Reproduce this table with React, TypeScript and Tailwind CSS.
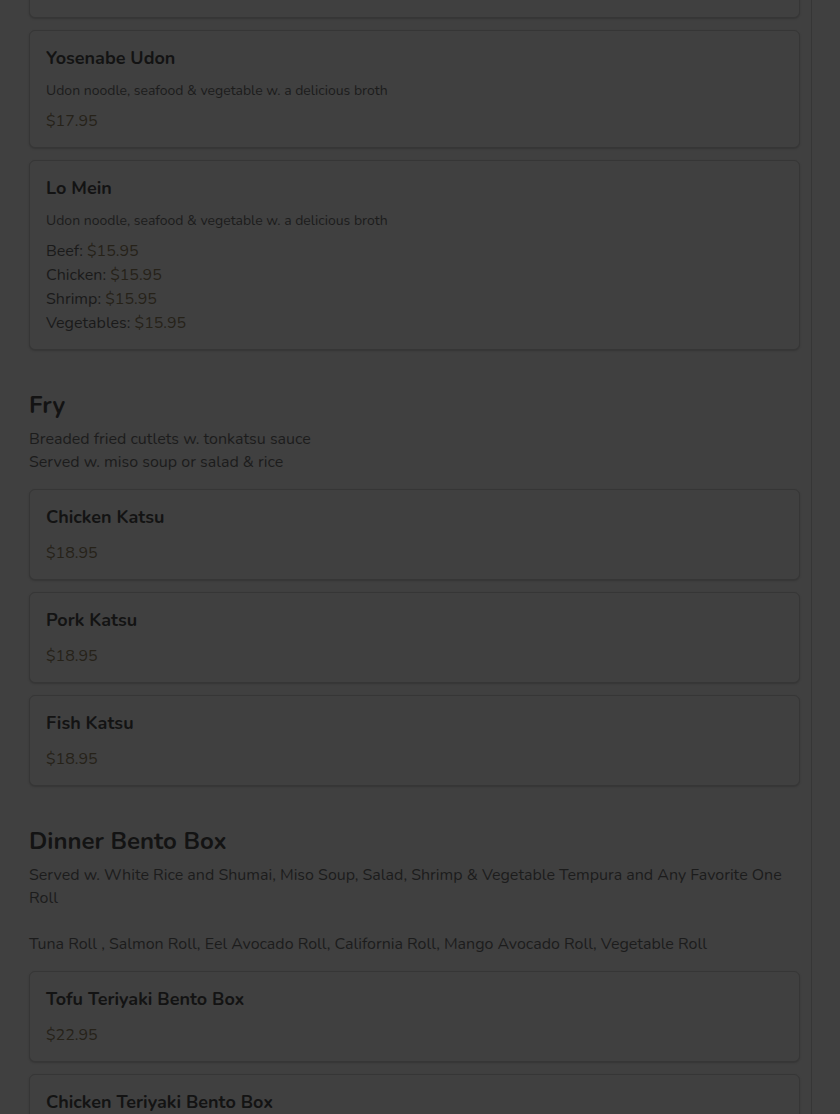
import React from 'react';

type Item = {
  name: string;
  desc?: string;
  prices: { label?: string; value: string }[];
};

type Section = {
  title?: string;
  notes?: string[];
  items: Item[];
};

const broth = 'Udon noodle, seafood & vegetable w. a delicious broth';

const sections: Section[] = [
  {
    items: [
      { name: 'Nabeyaki Udon', desc: broth, prices: [{ value: '$17.95' }] },
      { name: 'Yosenabe Udon', desc: broth, prices: [{ value: '$17.95' }] },
      {
        name: 'Lo Mein',
        desc: broth,
        prices: [
          { label: 'Beef', value: '$15.95' },
          { label: 'Chicken', value: '$15.95' },
          { label: 'Shrimp', value: '$15.95' },
          { label: 'Vegetables', value: '$15.95' },
        ],
      },
    ],
  },
  {
    title: 'Fry',
    notes: ['Breaded fried cutlets w. tonkatsu sauce', 'Served w. miso soup or salad & rice'],
    items: [
      { name: 'Chicken Katsu', prices: [{ value: '$18.95' }] },
      { name: 'Pork Katsu', prices: [{ value: '$18.95' }] },
      { name: 'Fish Katsu', prices: [{ value: '$18.95' }] },
    ],
  },
  {
    title: 'Dinner Bento Box',
    notes: [
      'Served w. White Rice and Shumai, Miso Soup, Salad, Shrimp & Vegetable Tempura and Any Favorite One Roll',
      '',
      'Tuna Roll , Salmon Roll, Eel Avocado Roll, California Roll, Mango Avocado Roll, Vegetable Roll',
    ],
    items: [
      { name: 'Tofu Teriyaki Bento Box', prices: [{ value: '$22.95' }] },
      { name: 'Chicken Teriyaki Bento Box', prices: [{ value: '$22.95' }] },
    ],
  },
];

const MenuCard: React.FC<{ item: Item }> = ({ item }) => (
  <div className="rounded-md border border-[#363636] bg-[#404040] px-4 pt-4 pb-[14px] shadow-[0_1px_2px_rgba(0,0,0,0.18)]">
    <h3 className="text-[18px] font-bold leading-[22px] text-[#131313]">{item.name}</h3>
    {item.desc && <p className="mt-3 text-[14px] leading-5 text-[#1c1c1c]">{item.desc}</p>}
    <div className={item.desc ? 'mt-2' : 'mt-[13px]'}>
      {item.prices.map((p, i) => (
        <div key={i} className="text-[16px] leading-6 text-[#1a1a1a]">
          {p.label && <span>{p.label}: </span>}
          <span className="text-[#262219]">{p.value}</span>
        </div>
      ))}
    </div>
  </div>
);

export default function App() {
  return (
    <div className="min-h-screen bg-[#404040] font-['Nunito','Lato',sans-serif]">
      <div className="w-[812px] min-h-screen border-r border-[#363636] pl-[29px] pr-[11px] overflow-hidden">
        <div className="-mt-[100px]">
          {sections.map((s, si) => (
            <section key={si} className={si > 0 ? 'mt-[39px]' : ''}>
              {s.title && (
                <div className="mb-[15px]">
                  <h2 className="text-[24px] font-bold leading-8 text-[#131313]">{s.title}</h2>
                  <div className="mt-[7px] text-[16px] leading-[23px] text-[#1c1c1c]">
                    {s.notes?.map((n, i) => (n ? <p key={i}>{n}</p> : <p key={i} className="h-[23px]" />))}
                  </div>
                </div>
              )}
              <div className="flex flex-col gap-3">
                {s.items.map((it) => (
                  <MenuCard key={it.name} item={it} />
                ))}
              </div>
            </section>
          ))}
        </div>
      </div>
    </div>
  );
}
